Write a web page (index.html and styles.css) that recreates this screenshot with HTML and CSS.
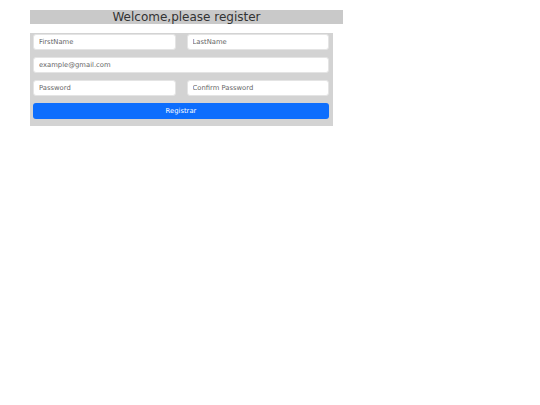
FILE: index.html
```html
<!DOCTYPE html>
<html>
<head>
<meta charset="utf-8">
<link rel="stylesheet" href="styles.css">
</head>
<body>
<div class="page">
  <h1 class="title">Welcome,please register</h1>
  <form class="form">
    <div class="row">
      <input class="field" type="text" placeholder="FirstName">
      <input class="field" type="text" placeholder="LastName">
    </div>
    <div class="row">
      <input class="field" type="email" placeholder="example@gmail.com">
    </div>
    <div class="row">
      <input class="field" type="password" placeholder="Password">
      <input class="field" type="password" placeholder="Confirm Password">
    </div>
    <button class="btn" type="button">Registrar</button>
  </form>
</div>
</body>
</html>
```

FILE: styles.css
```css
html, body {
  margin: 0;
  padding: 0;
  background: #fff;
  font-family: "DejaVu Sans", sans-serif;
}
.page {
  padding: 10px 0 0 30px;
}
.title {
  width: 313px;
  height: 14px;
  margin: 0;
  background: #c9c9c9;
  color: #333;
  font-size: 12px;
  font-weight: normal;
  line-height: 14px;
  text-align: center;
}
.form {
  width: 296px;
  margin-top: 9px;
  padding: 1px 4px 7px 3px;
  background: #d3d3d3;
  display: flex;
  flex-direction: column;
  gap: 7px;
}
.row {
  display: flex;
  gap: 11px;
}
.field {
  flex: 1;
  min-width: 0;
  height: 16px;
  box-sizing: border-box;
  border: 1px solid #e4e4e4;
  border-radius: 3px;
  background: #fff;
  padding: 0 5px;
  font-family: "DejaVu Sans", sans-serif;
  font-size: 6.8px;
  color: #333;
  outline: none;
}
.field::placeholder {
  color: #666;
}
.btn {
  height: 16px;
  border: none;
  border-radius: 3px;
  background: #0d6efd;
  color: #fff;
  font-family: "DejaVu Sans", sans-serif;
  font-size: 6.8px;
  padding: 0;
}
```
